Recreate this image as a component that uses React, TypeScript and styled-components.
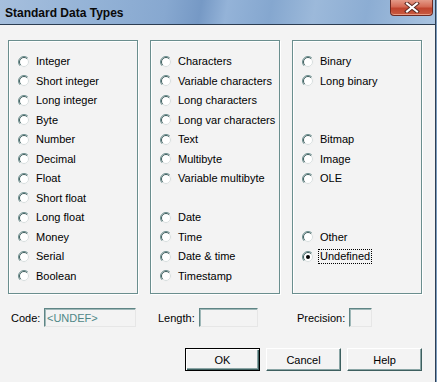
import React from 'react'
import styled, { createGlobalStyle } from 'styled-components'

const GlobalStyle = createGlobalStyle`
  html, body {
    margin: 0;
    padding: 0;
    background: #f3f3f3;
  }
  * {
    box-sizing: border-box;
  }
`

const Window = styled.div`
  width: 437px;
  height: 382px;
  display: flex;
  flex-direction: column;
  background: #f3f3f3;
  border-right: 1px solid #7d9cbd;
  font-family: 'Liberation Sans', Arial, sans-serif;
  font-size: 11px;
  color: #000;
  overflow: hidden;
`

const WindowInner = styled.div`
  flex: 1;
  display: flex;
  flex-direction: column;
  border-right: 1px solid #2d3f55;
`

const TitleBar = styled.div`
  height: 25px;
  flex-shrink: 0;
  display: flex;
  justify-content: space-between;
  align-items: flex-start;
  border-bottom: 1px solid #2c3d52;
  background: linear-gradient(
    100deg,
    #a6bfdd 0%,
    #93b2d6 22%,
    #87a8d0 38%,
    #7699c5 46%,
    #94b3d8 52%,
    #85a7cf 62%,
    #9cb9da 72%,
    #8cadd3 84%,
    #a9c3e0 100%
  );
`

const Title = styled.span`
  align-self: center;
  padding: 2px 0 0 5px;
  font-size: 12px;
  font-weight: bold;
  color: #0a0a0a;
`

const CloseButton = styled.div`
  width: 43px;
  height: 16px;
  margin-right: 2px;
  display: flex;
  align-items: center;
  justify-content: center;
  border: 1px solid #6e2a22;
  border-top: none;
  border-radius: 0 0 4px 4px;
  background: linear-gradient(180deg, #e49a88 0%, #d46a55 45%, #c0442e 55%, #c85a40 100%);
  box-shadow: inset 0 -1px 0 rgba(255, 200, 180, 0.6);
`

const Body = styled.div`
  flex: 1;
  padding: 15px 13px 0 8px;
  display: flex;
  flex-direction: column;
`

const Groups = styled.div`
  display: flex;
  justify-content: space-between;
`

const Group = styled.div`
  width: 130px;
  height: 254px;
  padding: 11px 0 0 9px;
  border: 1px solid #6a8e8e;
  box-shadow: inset 1px 1px 0 #ffffff, 1px 1px 0 #ffffff;
  display: flex;
  flex-direction: column;
`

const OptionRow = styled.div`
  height: 19.5px;
  display: flex;
  align-items: center;
  gap: 6px;
  white-space: nowrap;
`

const OptionLabel = styled.span<{ $focused?: boolean }>`
  line-height: 13px;
  border: 1px solid transparent;
  margin: 0 -2px;
  padding: 0 1px;
  ${(p) => p.$focused && 'border: 1px dotted #000;'}
`

const FieldRow = styled.div`
  margin-top: 14px;
  padding-left: 3px;
  height: 19px;
  display: flex;
  align-items: center;
`

const Field = styled.div<{ $w: number }>`
  width: ${(p) => p.$w}px;
  display: flex;
  align-items: center;
`

const FieldLabel = styled.span<{ $w: number }>`
  width: ${(p) => p.$w}px;
  white-space: nowrap;
`

const TextBox = styled.input<{ $w: number }>`
  width: ${(p) => p.$w}px;
  height: 19px;
  padding: 0 0 0 2px;
  margin: 0;
  border: 1px solid;
  border-color: #5f8585 #e6e6e6 #e6e6e6 #5f8585;
  box-shadow: inset 1px 1px 0 #9fb8b8;
  background: #f3f3f3;
  font-family: 'Liberation Sans', Arial, sans-serif;
  font-size: 11px;
  color: #4f8787;
  outline: none;
`

const ButtonRow = styled.div`
  margin-top: 21px;
  display: flex;
  justify-content: flex-end;
  gap: 6px;
`

const Button = styled.button<{ $default?: boolean }>`
  width: 75px;
  height: 23px;
  margin: 0;
  padding: 0;
  background: #f3f3f3;
  font-family: 'Liberation Sans', Arial, sans-serif;
  font-size: 11px;
  color: #000;
  border: 1px solid;
  border-color: #ffffff #3d5f5f #3d5f5f #ffffff;
  box-shadow: inset -1px -1px 0 #8aa5a5;
  ${(p) =>
    p.$default &&
    `
    border: 1px solid #000;
    box-shadow: inset 1px 1px 0 #ffffff, inset -1px -1px 0 #3d5f5f, inset -2px -2px 0 #8aa5a5;
  `}
`

const Radio = ({ checked }: { checked?: boolean }) => (
  <svg width="12" height="12" viewBox="0 0 12 12">
    <circle cx="6" cy="6" r="5.5" fill="#ffffff" />
    <path d="M2.1 9.9 A5.5 5.5 0 0 1 9.9 2.1" fill="none" stroke="#6b8d8d" strokeWidth="1" />
    <path d="M2.8 9.2 A4.5 4.5 0 0 1 9.2 2.8" fill="none" stroke="#3f5e5e" strokeWidth="1" />
    <path d="M9.9 2.1 A5.5 5.5 0 0 1 2.1 9.9" fill="none" stroke="#f0f0f0" strokeWidth="1" />
    <path d="M9.2 2.8 A4.5 4.5 0 0 1 2.8 9.2" fill="none" stroke="#d8dede" strokeWidth="1" />
    {checked && <circle cx="6" cy="6" r="2" fill="#000" />}
  </svg>
)

const CloseIcon = () => (
  <svg width="16" height="11" viewBox="0 0 16 11">
    <path d="M3 1.5 L13 9.5 M13 1.5 L3 9.5" stroke="#5a2a24" strokeWidth="4" strokeLinecap="square" />
    <path d="M3 1.5 L13 9.5 M13 1.5 L3 9.5" stroke="#ffffff" strokeWidth="2" strokeLinecap="square" />
  </svg>
)

// null = empty slot, rows keep a fixed pitch like the original dialog
const columns: (string | null)[][] = [
  [
    'Integer',
    'Short integer',
    'Long integer',
    'Byte',
    'Number',
    'Decimal',
    'Float',
    'Short float',
    'Long float',
    'Money',
    'Serial',
    'Boolean',
  ],
  [
    'Characters',
    'Variable characters',
    'Long characters',
    'Long var characters',
    'Text',
    'Multibyte',
    'Variable multibyte',
    null,
    'Date',
    'Time',
    'Date & time',
    'Timestamp',
  ],
  ['Binary', 'Long binary', null, null, 'Bitmap', 'Image', 'OLE', null, null, 'Other', 'Undefined'],
]

const selected = 'Undefined'

const App = () => {
  return (
    <>
      <GlobalStyle />
      <Window>
        <WindowInner>
          <TitleBar>
            <Title>Standard Data Types</Title>
            <CloseButton>
              <CloseIcon />
            </CloseButton>
          </TitleBar>
          <Body>
            <Groups>
              {columns.map((col, ci) => (
                <Group key={ci}>
                  {col.map((item, i) =>
                    item ? (
                      <OptionRow key={i}>
                        <Radio checked={item === selected} />
                        <OptionLabel $focused={item === selected}>{item}</OptionLabel>
                      </OptionRow>
                    ) : (
                      <OptionRow key={i} />
                    )
                  )}
                </Group>
              ))}
            </Groups>
            <FieldRow>
              <Field $w={147}>
                <FieldLabel $w={33}>Code:</FieldLabel>
                <TextBox $w={92} readOnly value="<UNDEF>" />
              </Field>
              <Field $w={139}>
                <FieldLabel $w={41}>Length:</FieldLabel>
                <TextBox $w={59} readOnly value="" />
              </Field>
              <Field $w={80}>
                <FieldLabel $w={52}>Precision:</FieldLabel>
                <TextBox $w={23} readOnly value="" />
              </Field>
            </FieldRow>
            <ButtonRow>
              <Button $default>OK</Button>
              <Button>Cancel</Button>
              <Button>Help</Button>
            </ButtonRow>
          </Body>
        </WindowInner>
      </Window>
    </>
  )
}

export default App
